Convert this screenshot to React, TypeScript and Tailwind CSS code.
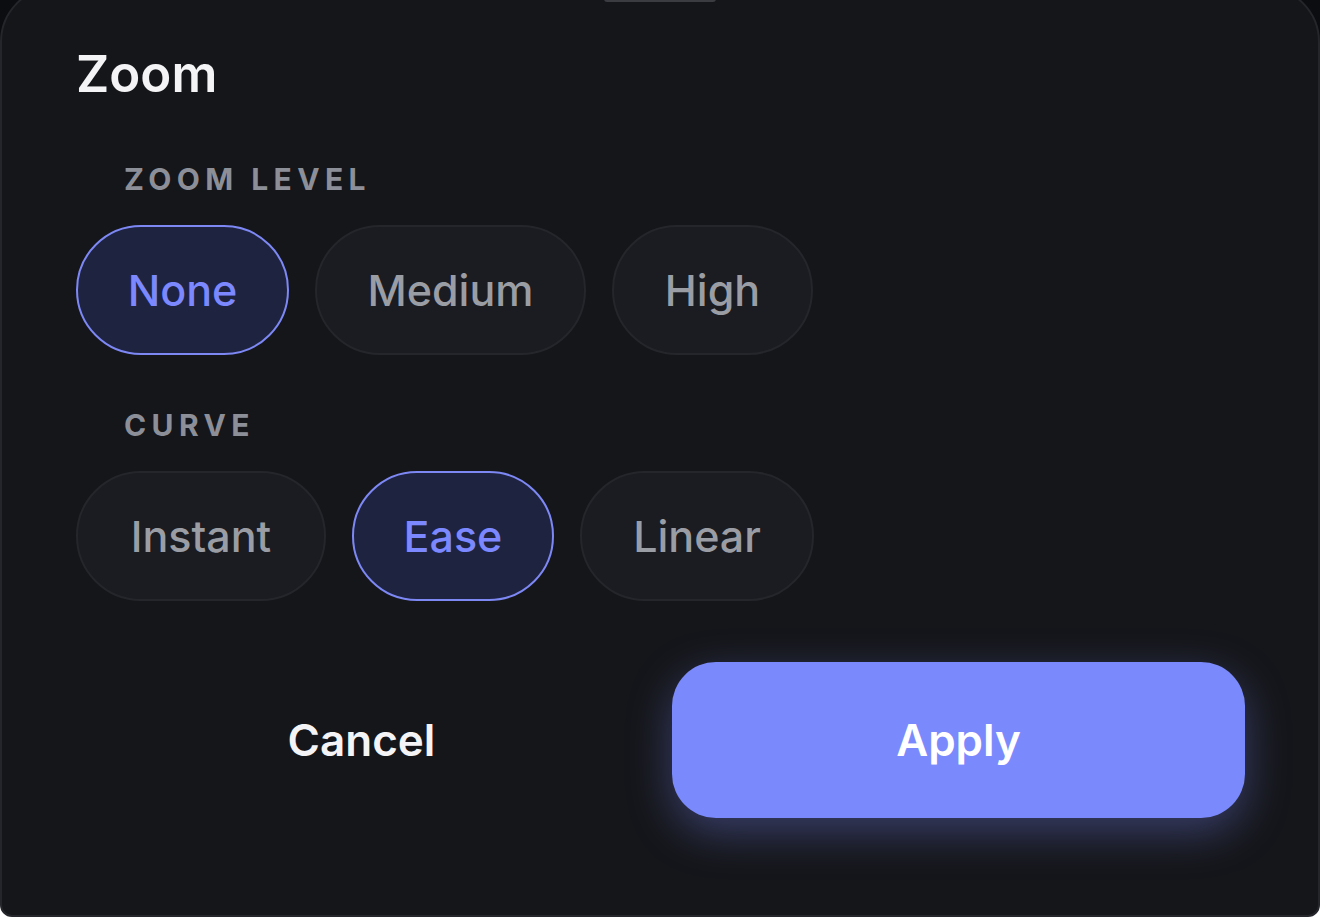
import { useState } from "react";

const zoomLevels = [
  { label: "None", w: "w-[213px]" },
  { label: "Medium", w: "w-[271px]" },
  { label: "High", w: "w-[201px]" },
];
const curves = [
  { label: "Instant", w: "w-[250px]" },
  { label: "Ease", w: "w-[202px]" },
  { label: "Linear", w: "w-[234px]" },
];

function Pill({ label, w, active, onClick }: { label: string; w: string; active: boolean; onClick: () => void }) {
  return (
    <button
      type="button"
      onClick={onClick}
      className={
        active
          ? `flex h-[130px] ${w} items-center justify-center rounded-full border-[2.5px] border-[#7d88f5] bg-[#1e2340] text-[43px] font-medium leading-none text-[#7b88ff]`
          : `flex h-[130px] ${w} items-center justify-center rounded-full border-2 border-[#24262b] bg-[#1a1c21] text-[43px] font-medium leading-none text-[#9b9da5]`
      }
    >
      {label}
    </button>
  );
}

export default function App() {
  const [level, setLevel] = useState("None");
  const [curve, setCurve] = useState("Ease");

  return (
    <div className="h-[917px] w-[1320px] overflow-hidden bg-white" style={{ fontFamily: "Inter, 'Noto Sans', sans-serif" }}>
      <div className="h-full rounded-b-[12px] bg-[#0c0d10]">
        <div className="-mt-[14px] flex h-[931px] flex-col rounded-t-[56px] rounded-b-[12px] border-2 border-[#24262b] bg-[#15161a]">
          <div className="mx-auto mt-[8px] h-[6px] w-[112px] rounded-full bg-[#3a3c42]" />

          <div className="pl-[74px]">
            <h1 className="mt-[46px] text-[51px] font-semibold leading-none text-[#f4f4f6]">Zoom</h1>

            <p className="ml-[48px] mt-[65px] text-[30px] font-bold uppercase leading-none tracking-[5.4px] text-[#8c8f98]">Zoom level</p>
            <div className="mt-[31px] flex gap-[26px]">
              {zoomLevels.map((l) => (
                <Pill key={l.label} label={l.label} w={l.w} active={level === l.label} onClick={() => setLevel(l.label)} />
              ))}
            </div>

            <p className="ml-[48px] mt-[55px] text-[30px] font-bold uppercase leading-none tracking-[5.4px] text-[#8c8f98]">Curve</p>
            <div className="mt-[31px] flex gap-[26px]">
              {curves.map((c) => (
                <Pill key={c.label} label={c.label} w={c.w} active={curve === c.label} onClick={() => setCurve(c.label)} />
              ))}
            </div>
          </div>

          <div className="mt-[61px] grid grid-cols-2 gap-6 pl-[73px] pr-[73px]">
            <button type="button" className="h-[156px] rounded-[44px] text-[44px] font-semibold text-[#f4f4f6]">
              Cancel
            </button>
            <button
              type="button"
              className="h-[156px] rounded-[44px] bg-[#7a8afd] text-[44px] font-semibold text-white shadow-[0_14px_44px_rgba(122,138,253,0.35)]"
            >
              Apply
            </button>
          </div>
        </div>
      </div>
    </div>
  );
}
